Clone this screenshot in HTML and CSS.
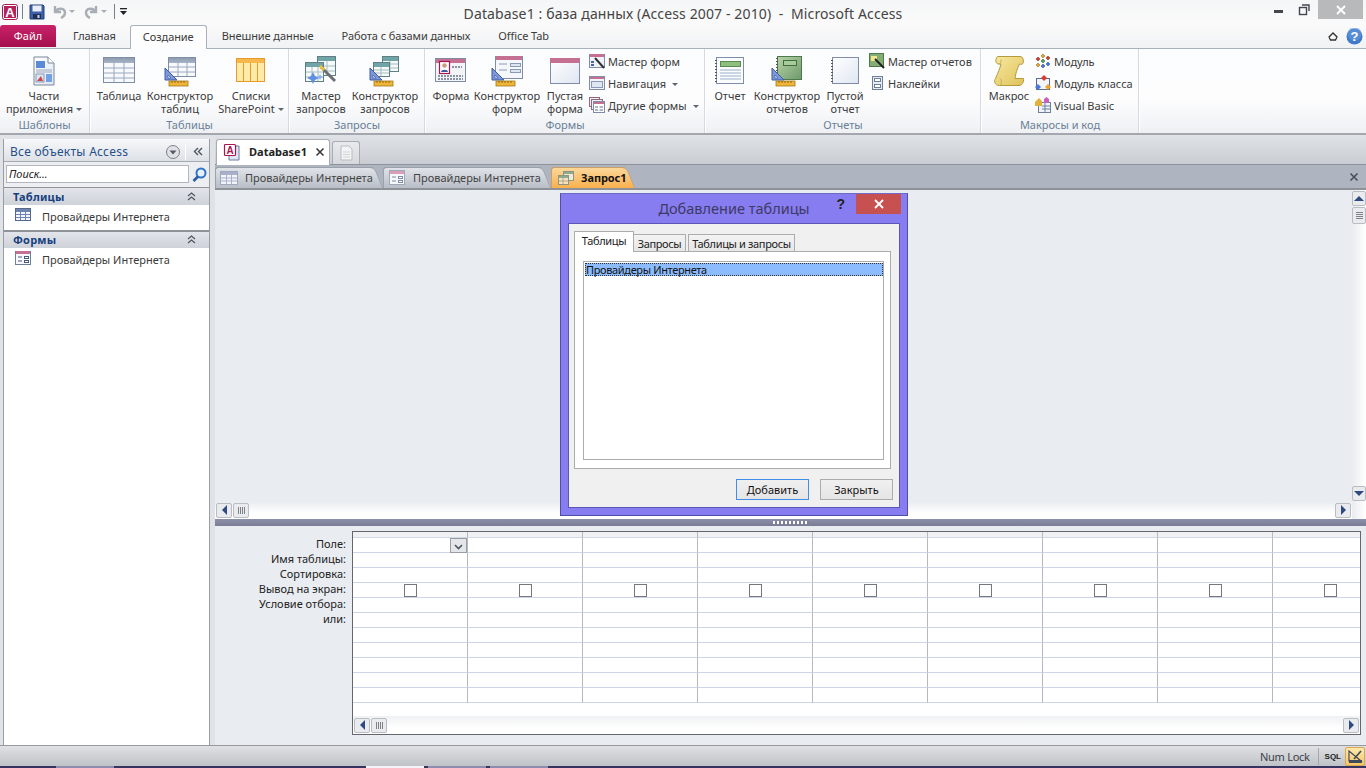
FILE: index.html
```html
<!DOCTYPE html>
<html lang="ru">
<head>
<meta charset="utf-8">
<title>Microsoft Access</title>
<link rel="stylesheet" href="styles.css">
</head>
<body>
<svg class="defs" width="0" height="0">
  <defs>
    <linearGradient id="gHead" x1="0" y1="0" x2="0" y2="1"><stop offset="0" stop-color="#8d9ab0"/><stop offset="1" stop-color="#a9b4c6"/></linearGradient>
    <linearGradient id="gPage" x1="0" y1="0" x2="1" y2="1"><stop offset="0" stop-color="#ffffff"/><stop offset="1" stop-color="#dfe6f2"/></linearGradient>
    <linearGradient id="gScroll" x1="0" y1="0" x2="1" y2="1"><stop offset="0" stop-color="#f6e9a0"/><stop offset="1" stop-color="#e0c25a"/></linearGradient>
    <linearGradient id="gGreen" x1="0" y1="0" x2="1" y2="1"><stop offset="0" stop-color="#b7d3a8"/><stop offset="1" stop-color="#6f9a6a"/></linearGradient>
    <g id="tri">
      <path d="M1 0V12H13Z" fill="#7d97d8" stroke="#3c5ba8"/>
      <path d="M4 7V10H7Z" fill="#fff" stroke="#3c5ba8" stroke-width=".7"/>
      <rect x="5" y="13" width="19" height="5" fill="#eeb53a" stroke="#a37a18" stroke-width=".8"/>
      <path d="M8 13v2M11 13v2M14 13v2M17 13v2M20 13v2" stroke="#7f5b0a" stroke-width=".8"/>
    </g>
  </defs>
</svg>

<header class="titlebar">
  <div class="qat">
    <svg width="16" height="16" viewBox="0 0 16 16"><rect x=".5" y=".5" width="15" height="15" rx="2" fill="#fff" stroke="#a5174f"/><rect x="2" y="2" width="12" height="12" fill="#b4225c"/><text x="8" y="13" class="app-a">A</text></svg>
    <span class="qat-sep"></span>
    <svg width="16" height="16" viewBox="0 0 16 16"><path d="M1 1H14L15 2V15H1Z" fill="#3d5ea8" stroke="#24417f"/><rect x="3.5" y="1.5" width="9" height="6" fill="#e8edf7"/><rect x="4" y="10" width="8" height="5" fill="#1f2f55"/><rect x="8.500" y="11" width="2" height="3" fill="#cbd5e8"/></svg>
    <svg class="qat-undo" width="16" height="16" viewBox="0 0 16 16"><path d="M3 2V8H9M3 8C6 3 13 4 13 9C13 12 11 13 9 14" fill="none" stroke="#a9aeb6" stroke-width="2.400"/></svg>
    <i class="mini-caret mc1"></i>
    <svg class="qat-redo" width="16" height="16" viewBox="0 0 16 16"><path d="M13 2V8H7M13 8C10 3 3 4 3 9C3 12 5 13 7 14" fill="none" stroke="#a9aeb6" stroke-width="2.400"/></svg>
    <i class="mini-caret mc2"></i>
    <span class="qat-sep qat-sep2"></span>
    <svg width="9" height="9" viewBox="0 0 9 9"><rect x="1" y="1" width="7" height="1.300" fill="#222"/><path d="M1 4H8L4.500 8Z" fill="#222"/></svg>
  </div>
  <div class="app-title">Database1 : база данных (Access 2007 - 2010)&nbsp; -&nbsp; Microsoft Access</div>
  <div class="win-controls">
    <svg width="26" height="19" viewBox="0 0 26 19"><rect x="8" y="10" width="9" height="3" fill="#44484e"/></svg>
    <svg width="26" height="19" viewBox="0 0 26 19"><rect x="7.500" y="7.500" width="7" height="7" fill="none" stroke="#44484e" stroke-width="1.400"/><path d="M10 5H17V11" fill="none" stroke="#44484e" stroke-width="1.400"/></svg>
    <span class="win-close"><svg width="12" height="12" viewBox="0 0 12 12"><path d="M2 2L10 10M10 2L2 10" stroke="#fff" stroke-width="2"/></svg></span>
  </div>
</header>

<nav class="tabbar">
  <span class="tab-file">Файл</span>
  <span class="tab t-home">Главная</span>
  <span class="tab tab-active">Создание</span>
  <span class="tab t-ext">Внешние данные</span>
  <span class="tab t-db">Работа с базами данных</span>
  <span class="tab t-office">Office Tab</span>
  <span class="tab-tools">
    <svg width="10" height="9" viewBox="0 0 10 9"><path d="M1 5L5 1L9 5L7.500 8H2.500Z" fill="none" stroke="#333" stroke-width="1.300"/></svg>
    <svg width="17" height="17" viewBox="0 0 17 17"><circle cx="8.500" cy="8.500" r="8" fill="#3f79c9"/><circle cx="8.500" cy="6" r="7" fill="#6d9fe0" opacity=".5"/><text x="8.500" y="13" class="help-q">?</text></svg>
  </span>
</nav>

<section class="ribbon">
  <div class="group g-tpl">
    <div class="group-body">
      <div class="big b-parts">
        <svg width="32" height="32" viewBox="0 0 32 32"><path d="M6 2H20L26 8V30H6Z" fill="url(#gPage)" stroke="#7b8798"/><path d="M20 2V8H26" fill="#fff" stroke="#7b8798"/><rect x="8" y="6" width="9" height="7" fill="#5d8ad6"/><path d="M8 15H24M8 17H24" stroke="#9aa7bb"/><rect x="8" y="19" width="8" height="8" fill="#dce6f4" stroke="#8a9ab5"/><path d="M9 26L13 21L15 26Z" fill="#c44"/><rect x="18" y="19" width="6" height="8" fill="#71a3e4"/></svg>
        <span class="blabel">Части<br>приложения<i class="caret"></i></span>
      </div>
    </div>
    <div class="group-label">Шаблоны</div>
  </div>

  <div class="group g-tbl">
    <div class="group-body">
      <div class="big b-table">
        <svg width="32" height="32" viewBox="0 0 32 32"><rect x=".5" y="2.500" width="31" height="25" fill="#f7f9fd" stroke="#7f8ea6"/><rect x="1" y="3" width="30" height="5" fill="url(#gHead)"/><path d="M1 13H31M1 18H31M1 23H31M11 3V27M21 3V27" stroke="#9aa8bf"/></svg>
        <span class="blabel">Таблица</span>
      </div>
      <div class="big b-ctable">
        <svg width="32" height="32" viewBox="0 0 32 32"><rect x="4.500" y="2.500" width="27" height="19" fill="#f7f9fd" stroke="#7f8ea6"/><rect x="5" y="3" width="26" height="5" fill="url(#gHead)"/><path d="M5 12H31M5 17H31M14 3V21M23 3V21" stroke="#9aa8bf"/><use href="#tri" x="0" y="13"/></svg>
        <span class="blabel">Конструктор<br>таблиц</span>
      </div>
      <div class="big b-list">
        <svg width="32" height="32" viewBox="0 0 32 32"><rect x="1.500" y="3.500" width="28" height="23" fill="#ffeaa8" stroke="#e89a2c"/><rect x="2" y="4" width="27" height="4" fill="#f7b74a"/><path d="M8.500 8V26M15.500 8V26M22.500 8V26" stroke="#e89a2c"/></svg>
        <span class="blabel">Списки<br>SharePoint<i class="caret"></i></span>
      </div>
    </div>
    <div class="group-label">Таблицы</div>
  </div>

  <div class="group g-qry">
    <div class="group-body">
      <div class="big b-wq">
        <svg width="32" height="32" viewBox="0 0 32 32"><rect x="12.500" y="1.500" width="18" height="19" fill="#f5f9f9" stroke="#5f7f84"/><rect x="13" y="2" width="17" height="4" fill="#70a4a6"/><path d="M13 11H30M13 16H30M22 6V20" stroke="#a7bcc0"/><rect x=".5" y="7.500" width="18" height="19" fill="#f5f9f9" stroke="#5f7f84"/><rect x="1" y="8" width="17" height="4" fill="#70a4a6"/><path d="M1 17H18M1 22H18M7 12V26M13 12V26" stroke="#a7bcc0"/><path d="M16 12L30 26" stroke="#6a6f76" stroke-width="3"/><path d="M15 11L19 15" stroke="#eec23e" stroke-width="3"/><path d="M8 17L10 21L14 23L10 25L8 29L6 25L2 23L6 21Z" fill="#5f8fe0"/><path d="M15 19L16 21L18 22L16 23L15 25L14 23L12 22L14 21Z" fill="#86aef0"/></svg>
        <span class="blabel">Мастер<br>запросов</span>
      </div>
      <div class="big b-cq">
        <svg width="32" height="32" viewBox="0 0 32 32"><rect x="13.500" y="1.500" width="16" height="15" fill="#f5f9f9" stroke="#5f7f84"/><rect x="14" y="2" width="15" height="4" fill="#70a4a6"/><path d="M14 9H29M14 13H29M21 6V16" stroke="#a7bcc0"/><rect x="4.500" y="7.500" width="16" height="14" fill="#f5f9f9" stroke="#5f7f84"/><rect x="5" y="8" width="15" height="4" fill="#70a4a6"/><path d="M5 15H20M5 18H20M12 12V21" stroke="#a7bcc0"/><use href="#tri" x="0" y="13"/></svg>
        <span class="blabel">Конструктор<br>запросов</span>
      </div>
    </div>
    <div class="group-label">Запросы</div>
  </div>

  <div class="group g-frm">
    <div class="group-body">
      <div class="big b-f">
        <svg width="32" height="32" viewBox="0 0 32 32"><rect x=".5" y="3.500" width="30" height="23" fill="#f3f4f8" stroke="#7f8ea6"/><rect x="1" y="4" width="29" height="4" fill="#c56f93"/><rect x="4.500" y="6.500" width="10" height="12" fill="#fff" stroke="#a5174f" stroke-width="1.200"/><circle cx="9.500" cy="10.500" r="2.300" fill="#c99c80"/><path d="M6 17C6 14 13 14 13 17Z" fill="#3e5c9a"/><path d="M17 12H27M3 21H28M3 24H28" stroke="#8a93a3" stroke-width="2" stroke-dasharray="2 1"/></svg>
        <span class="blabel">Форма</span>
      </div>
      <div class="big b-cf">
        <svg width="32" height="32" viewBox="0 0 32 32"><rect x="4.500" y="1.500" width="27" height="22" fill="#f6f7fb" stroke="#7f8ea6"/><rect x="5" y="1" width="26" height="4" fill="#c56f93"/><path d="M8 9H16M8 15H16" stroke="#8a9ab5"/><rect x="19.500" y="8.500" width="10" height="3" fill="#dfe6f2" stroke="#8a9ab5"/><rect x="19.500" y="14.500" width="10" height="3" fill="#dfe6f2" stroke="#8a9ab5"/><use href="#tri" x="0" y="13"/></svg>
        <span class="blabel">Конструктор<br>форм</span>
      </div>
      <div class="big b-ef">
        <svg width="32" height="32" viewBox="0 0 32 32"><rect x="1.500" y="3.500" width="29" height="25" fill="url(#gPage)" stroke="#7f8ea6"/><rect x="1" y="3" width="30" height="5" fill="#c56f93"/></svg>
        <span class="blabel">Пустая<br>форма</span>
      </div>
      <div class="small-col c-frm">
        <div class="small"><svg width="16" height="16" viewBox="0 0 16 16"><rect x=".5" y="1.500" width="15" height="13" fill="#eef1f7" stroke="#7f8ea6"/><rect x="1" y="1" width="14" height="3" fill="#c56f93"/><path d="M6 5L15 15" stroke="#333" stroke-width="2"/><path d="M2 9H5M2 12H5" stroke="#4a64a8" stroke-width="2"/></svg><span>Мастер форм</span></div>
        <div class="small"><svg width="16" height="16" viewBox="0 0 16 16"><rect x=".5" y="1.500" width="15" height="13" fill="#f3f4f8" stroke="#7f8ea6"/><rect x="1" y="2" width="14" height="2" fill="#c56f93"/><rect x="2.500" y="6.500" width="11" height="6" fill="#dfe6f2" stroke="#8a9ab5"/></svg><span>Навигация<i class="caret c-gap"></i></span></div>
        <div class="small"><svg width="16" height="16" viewBox="0 0 16 16"><rect x=".5" y=".5" width="10" height="9" fill="#eef1f7" stroke="#8a6a7a"/><rect x="2.500" y="2.500" width="11" height="10" fill="#eef1f7" stroke="#8a6a7a"/><rect x="4.500" y="4.500" width="11" height="11" fill="#fff" stroke="#7f8ea6"/><rect x="5" y="5" width="10" height="2" fill="#c56f93"/><path d="M6 10H9M6 13H9M10.500 10H14M10.500 13H14" stroke="#5f6f88"/></svg><span>Другие формы<i class="caret c-gap"></i></span></div>
      </div>
    </div>
    <div class="group-label">Формы</div>
  </div>

  <div class="group g-rep">
    <div class="group-body">
      <div class="big b-r">
        <svg width="32" height="32" viewBox="0 0 32 32"><rect x="2.500" y="2.500" width="27" height="26" fill="#fbfcfe" stroke="#7f8ea6"/><path d="M2 5V27" stroke="#555" stroke-width="2" stroke-dasharray="1 2"/><rect x="6.500" y="6.500" width="20" height="5" fill="#8fbf7f" stroke="#5c8a50"/><path d="M6 15H27M6 18H27M6 21H27M6 24H27" stroke="#9ab0c8"/></svg>
        <span class="blabel">Отчет</span>
      </div>
      <div class="big b-cr">
        <svg width="32" height="32" viewBox="0 0 32 32"><rect x="6.500" y="1.500" width="24" height="23" fill="url(#gGreen)" stroke="#4d7a4d"/><path d="M6 3V24" stroke="#555" stroke-width="2" stroke-dasharray="1 2"/><rect x="12.500" y="5.500" width="13" height="5" fill="#a8cc98" stroke="#3f6d3f"/><use href="#tri" x="0" y="13"/></svg>
        <span class="blabel">Конструктор<br>отчетов</span>
      </div>
      <div class="big b-er">
        <svg width="32" height="32" viewBox="0 0 32 32"><rect x="3.500" y="2.500" width="26" height="26" fill="url(#gPage)" stroke="#7f8ea6"/><path d="M3 5V27" stroke="#555" stroke-width="2" stroke-dasharray="1 2"/></svg>
        <span class="blabel">Пустой<br>отчет</span>
      </div>
      <div class="small-col c-rep">
        <div class="small"><svg width="16" height="16" viewBox="0 0 16 16"><rect x=".5" y=".5" width="14" height="13" fill="#84ad76" stroke="#4d7a4d"/><rect x="2" y="3" width="6" height="5" fill="#f0e98c"/><path d="M6 6L15 15" stroke="#222" stroke-width="2"/></svg><span>Мастер отчетов</span></div>
        <div class="small"><svg width="16" height="16" viewBox="0 0 16 16"><rect x="3.500" y="1.500" width="10" height="13" fill="#e8edf5" stroke="#6f8096"/><rect x="5.500" y="3.500" width="6" height="3" fill="#fff" stroke="#6f8096"/><rect x="5.500" y="9.500" width="6" height="3" fill="#fff" stroke="#6f8096"/></svg><span>Наклейки</span></div>
      </div>
    </div>
    <div class="group-label">Отчеты</div>
  </div>

  <div class="group g-mac">
    <div class="group-body">
      <div class="big b-m">
        <svg width="32" height="32" viewBox="0 0 32 32"><path d="M5 1.500H27C30 1.500 31 5 30 8.500C29 9.500 27.500 9.500 26.500 9C24 14 22.500 19 22 23.500H30.500C31 27 29 30.500 26 30.500H6C2 30.500 .5 26 2.500 23.500C5 18 7 13 8 9H5.500C3.500 9 2.500 7 3 4.500C3.300 3 4 1.500 5 1.500Z" fill="url(#gScroll)" stroke="#b59a3c"/><path d="M5.500 9C7 9 8.500 7.500 8 4.500M6 30.500C8.500 30.500 9.500 26 7 23.500" fill="none" stroke="#c9ae50"/></svg>
        <span class="blabel">Макрос</span>
      </div>
      <div class="small-col c-mac">
        <div class="small"><svg width="16" height="16" viewBox="0 0 16 16"><path d="M8 1L10 3L8 5L6 3Z" fill="#e6a52e" stroke="#8a5c10" stroke-width=".5"/><path d="M3 4L5 6L3 8L1 6Z" fill="#d83b2a" stroke="#7a1a10" stroke-width=".5"/><path d="M13 3L15 5L13 7L11 5Z" fill="#d83b2a" stroke="#7a1a10" stroke-width=".5"/><path d="M8 6L10 8L8 10L6 8Z" fill="#4da34d" stroke="#2a602a" stroke-width=".5"/><path d="M3 10L5 12L3 14L1 12Z" fill="#e6a52e" stroke="#8a5c10" stroke-width=".5"/><path d="M13 9L15 11L13 13L11 11Z" fill="#4b78d8" stroke="#233f80" stroke-width=".5"/><path d="M8 11L10 13L8 15L6 13Z" fill="#4b78d8" stroke="#233f80" stroke-width=".5"/></svg><span>Модуль</span></div>
        <div class="small"><svg width="16" height="16" viewBox="0 0 16 16"><rect x="1.500" y="3.500" width="13" height="11" fill="#f2f4f9" stroke="#5a6b88"/><path d="M9 0L12 3L9 6L6 3Z" fill="#d83b2a"/><path d="M3 9L6 12L3 15L0 12Z" fill="#4b78d8"/><path d="M13 9L16 12L13 15L10 12Z" fill="#e6a52e"/></svg><span>Модуль класса</span></div>
        <div class="small"><svg width="16" height="16" viewBox="0 0 16 16"><rect x="3.500" y="5.500" width="12" height="10" fill="#eef3fb" stroke="#6f8096"/><path d="M7 9H15M7 12H15M10 6V15" stroke="#6f80a0"/><path d="M0 5L4 1L7 4V9H0Z" fill="#e3b23c"/><path d="M9 2L11.500 0L14 2V6H9Z" fill="#c95fc0"/></svg><span>Visual Basic</span></div>
      </div>
    </div>
    <div class="group-label">Макросы и код</div>
  </div>
  <div class="group-rest"></div>
</section>

<main class="workspace">
  <aside class="navpane">
    <div class="nav-head">
      <span class="nav-title">Все объекты Access</span>
      <svg class="nav-drop" width="16" height="16" viewBox="0 0 16 16"><circle cx="8" cy="8" r="6.500" fill="#dfe2e7" stroke="#7c8087"/><path d="M4.500 6.500H11.500L8 10.500Z" fill="#555a62"/></svg>
      <span class="nav-vsep"></span>
      <svg class="nav-col" width="10" height="9" viewBox="0 0 10 9"><path d="M5 1L1.500 4.500L5 8M9 1L5.500 4.500L9 8" fill="none" stroke="#4d5460" stroke-width="1.400"/></svg>
    </div>
    <div class="nav-search">
      <span class="search-box">Поиск...</span>
      <svg width="17" height="17" viewBox="0 0 17 17"><circle cx="10" cy="7" r="4.500" fill="#e6f0fb" stroke="#2f74c4" stroke-width="2"/><path d="M7 10.500L2.500 15" stroke="#2a5e9e" stroke-width="2.600"/></svg>
    </div>
    <div class="nav-group">
      <span>Таблицы</span>
      <svg width="9" height="9" viewBox="0 0 9 9"><path d="M1 4L4.500 1L8 4M1 8L4.500 5L8 8" fill="none" stroke="#4d5460" stroke-width="1.200"/></svg>
    </div>
    <div class="nav-item">
      <svg width="16" height="14" viewBox="0 0 16 14"><rect x=".5" y=".5" width="15" height="12" fill="#f3f6fc" stroke="#55688a"/><rect x="1" y="1" width="14" height="3" fill="#6e83ad"/><path d="M1 6.500H15M1 9.500H15M5.500 1V12M10.500 1V12" stroke="#6e83ad"/></svg>
      <span>Провайдеры Интернета</span>
    </div>
    <div class="nav-group ng2">
      <span>Формы</span>
      <svg width="9" height="9" viewBox="0 0 9 9"><path d="M1 4L4.500 1L8 4M1 8L4.500 5L8 8" fill="none" stroke="#4d5460" stroke-width="1.200"/></svg>
    </div>
    <div class="nav-item">
      <svg width="16" height="14" viewBox="0 0 16 14"><rect x=".5" y=".5" width="15" height="13" fill="#f7f8fb" stroke="#6e7f9a"/><rect x="1" y="0" width="14" height="3" fill="#c56f93"/><path d="M3 6H7M3 10H7" stroke="#47597a"/><rect x="9.500" y="5.500" width="4" height="2" fill="#fff" stroke="#47597a"/><rect x="9.500" y="9.500" width="4" height="2" fill="#fff" stroke="#47597a"/></svg>
      <span>Провайдеры Интернета</span>
    </div>
  </aside>

  <div class="docarea">
    <div class="officetabs">
      <div class="otab">
        <svg width="18" height="18" viewBox="0 0 18 18"><path d="M6 3H16V17H6Z" fill="#dfe6f2" stroke="#6b7ca0"/><rect x="1.500" y="1.500" width="11" height="11" rx="1" fill="#fff" stroke="#a5174f" stroke-width="1.200"/><text x="7" y="11" class="ot-a">A</text></svg>
        <b>Database1</b>
        <svg class="otab-x" width="10" height="10" viewBox="0 0 10 10"><path d="M1.500 1.500L8.500 8.500M8.500 1.500L1.500 8.500" stroke="#333" stroke-width="1.500"/></svg>
      </div>
      <div class="otab-new"><svg width="13" height="16" viewBox="0 0 13 16"><path d="M1 1H9L12 4V15H1Z" fill="#f4f4f4" stroke="#b8bcc2"/><path d="M3 7H10M3 9.500H10M3 12H10" stroke="#d0d3d8"/></svg></div>
    </div>

    <div class="objtabs">
      <div class="obj">
        <svg width="18" height="14" viewBox="0 0 18 14"><rect x=".5" y=".5" width="17" height="13" fill="#f2f4fa" stroke="#9fa8c0"/><rect x="1" y="1" width="16" height="3" fill="#a7b1cc"/><path d="M1 7H17M1 10H17M6.500 1V13M11.500 1V13" stroke="#a7b1cc"/></svg>
        <span>Провайдеры Интернета</span>
      </div>
      <div class="obj obj2">
        <svg width="16" height="15" viewBox="0 0 16 15"><rect x=".5" y=".5" width="15" height="14" fill="#f6f7fb" stroke="#9fa8b8"/><rect x="1" y="1" width="14" height="3" fill="#d8a0b8"/><path d="M3 7H7M3 11H7" stroke="#7d8aa0"/><rect x="9.500" y="6.500" width="4" height="2" fill="#fff" stroke="#7d8aa0"/><rect x="9.500" y="10.500" width="4" height="2" fill="#fff" stroke="#7d8aa0"/></svg>
        <span>Провайдеры Интернета</span>
      </div>
      <div class="obj obj-on">
        <svg width="16" height="14" viewBox="0 0 16 14"><rect x="5.500" y=".5" width="10" height="9" fill="#f2ead8" stroke="#8e9680"/><rect x="6" y="1" width="9" height="2" fill="#8fa890"/><rect x=".5" y="4.500" width="10" height="9" fill="#f5e2c0" stroke="#8e9680"/><rect x="1" y="5" width="9" height="2" fill="#8fa890"/><path d="M1 10H10M5 7V13" stroke="#b4a888"/></svg>
        <b>Запрос1</b>
      </div>
      <svg class="obj-close" width="10" height="10" viewBox="0 0 10 10"><path d="M1.500 1.500L8.500 8.500M8.500 1.500L1.500 8.500" stroke="#4a4f58" stroke-width="1.600"/></svg>
    </div>

    <div class="qwin">
      <div class="upper">
        <div class="upper-main">
          <div class="upper-canvas"></div>
          <div class="hbar upper-h">
            <span class="sb-btn"><i class="arr-l"></i></span>
            <span class="sb-thumb"><i class="grip-v"></i></span>
            <span class="sb-fill"></span>
            <span class="sb-btn"><i class="arr-r"></i></span>
          </div>
        </div>
        <div class="vbar">
          <span class="vb-btn"><i class="arr-u"></i></span>
          <span class="vb-thumb"><i class="grip-h"></i></span>
          <span class="vb-fill"></span>
          <span class="vb-btn"><i class="arr-d"></i></span>
        </div>
      </div>
      <div class="splitter"><span class="split-grip"></span></div>
      <div class="lower">
        <div class="row-labels">
          <div>Поле:</div>
          <div>Имя таблицы:</div>
          <div>Сортировка:</div>
          <div>Вывод на экран:</div>
          <div>Условие отбора:</div>
          <div>или:</div>
        </div>
        <div class="qbe">
          <div class="qbe-scroll">
            <table class="qbe-table">
              <tr class="hdr"><td></td><td></td><td></td><td></td><td></td><td></td><td></td><td></td><td></td></tr>
              <tr><td class="has-drop"><span class="cell-drop"><svg width="9" height="6" viewBox="0 0 9 6"><path d="M1 1L4.500 4.500L8 1" fill="none" stroke="#4d5460" stroke-width="1.600"/></svg></span></td><td></td><td></td><td></td><td></td><td></td><td></td><td></td><td></td></tr>
              <tr><td></td><td></td><td></td><td></td><td></td><td></td><td></td><td></td><td></td></tr>
              <tr><td></td><td></td><td></td><td></td><td></td><td></td><td></td><td></td><td></td></tr>
              <tr class="chk"><td><i></i></td><td><i></i></td><td><i></i></td><td><i></i></td><td><i></i></td><td><i></i></td><td><i></i></td><td><i></i></td><td><i></i></td></tr>
              <tr><td></td><td></td><td></td><td></td><td></td><td></td><td></td><td></td><td></td></tr>
              <tr><td></td><td></td><td></td><td></td><td></td><td></td><td></td><td></td><td></td></tr>
              <tr><td></td><td></td><td></td><td></td><td></td><td></td><td></td><td></td><td></td></tr>
              <tr><td></td><td></td><td></td><td></td><td></td><td></td><td></td><td></td><td></td></tr>
              <tr><td></td><td></td><td></td><td></td><td></td><td></td><td></td><td></td><td></td></tr>
              <tr><td></td><td></td><td></td><td></td><td></td><td></td><td></td><td></td><td></td></tr>
              <tr><td></td><td></td><td></td><td></td><td></td><td></td><td></td><td></td><td></td></tr>
            </table>
          </div>
          <div class="hbar lower-h">
            <span class="sb-btn"><i class="arr-l"></i></span>
            <span class="sb-thumb"><i class="grip-v"></i></span>
            <span class="sb-fill"></span>
            <span class="sb-btn"><i class="arr-r"></i></span>
          </div>
        </div>
      </div>
    </div>
  </div>
</main>

<footer class="statusbar">
  <span class="num">Num Lock</span>
  <span class="st-sep"></span>
  <span class="sql">SQL</span>
  <span class="design"><svg width="15" height="15" viewBox="0 0 15 15"><path d="M1 2V12H13Z" fill="none" stroke="#3f4a5a" stroke-width="1.200"/><path d="M6 10L13 2" stroke="#3f4a5a" stroke-width="1.600"/><rect x="1" y="11" width="13" height="3" fill="#3f4a5a"/></svg></span>
</footer>
<div class="taskstrip">
  <span class="ts ts-a"></span><span class="ts ts-b"></span><span class="ts ts-c"></span><span class="ts ts-d"></span>
</div>

<div class="dialog">
  <div class="dlg-title">
    <span class="dlg-text">Добавление таблицы</span>
    <span class="dlg-q">?</span>
    <span class="dlg-close"><svg width="10" height="10" viewBox="0 0 10 10"><path d="M1 1L9 9M9 1L1 9" stroke="#fff" stroke-width="1.800"/></svg></span>
  </div>
  <div class="dlg-body">
    <div class="dlg-tabs">
      <span class="dtab dtab-on">Таблицы</span>
      <span class="dtab d2">Запросы</span>
      <span class="dtab d3">Таблицы и запросы</span>
    </div>
    <div class="dlg-panel">
      <div class="dlg-list">
        <div class="dlg-sel">Провайдеры Интернета</div>
      </div>
    </div>
    <div class="dlg-btns">
      <span class="btn btn-def">Добавить</span>
      <span class="btn">Закрыть</span>
    </div>
  </div>
</div>
</body>
</html>
```

FILE: styles.css
```css
* { box-sizing: border-box; }
html, body { margin: 0; padding: 0; }
body {
  width: 1366px; height: 768px; overflow: hidden; position: relative;
  font: 11px/13px "Noto Sans", sans-serif;
  color: #3b3b3b; background: #fff;
  display: flex; flex-direction: column;
}
.defs { position: absolute; }
svg { display: block; flex: none; }
i { font-style: normal; }

/* Title bar */
.titlebar { height: 25px; display: flex; align-items: flex-start; background: linear-gradient(#f5f6f7, #fafafa); position: relative; flex: none; }
.qat { display: flex; align-items: center; height: 23px; padding-left: 2px; width: 400px; position: relative; z-index: 1; }
.qat-sep { width: 1px; height: 15px; background: #7a7f88; margin: 0 6px 0 4px; }
.qat-sep2 { margin: 0 4px 0 7px; }
.app-a { font: bold 13px "Liberation Sans", sans-serif; fill: #fff; text-anchor: middle; }
.qat-undo { margin-left: 7px; }
.qat-redo { margin-left: 8px; }
.mini-caret { width: 0; height: 0; border: 3px solid transparent; border-top: 3px solid #a9aeb6; border-bottom: 0; }
.mc1 { margin-left: 1px; }
.mc2 { margin-left: 2px; }
.app-title { position: absolute; left: 0; right: 0; top: 4px; text-align: center; font: 14px/19px "Noto Sans", sans-serif; letter-spacing: .13px; color: #444; }
.win-controls { margin-left: auto; display: flex; position: relative; }
.win-close { width: 45px; height: 19px; background: #b7b9bb; display: flex; align-items: center; justify-content: center; margin-right: 3px; }

/* Ribbon tabs */
.tabbar { height: 24px; display: flex; align-items: flex-end; position: relative; flex: none; background: linear-gradient(#fafafa, #f1f2f4); border-bottom: 1px solid #a9b1bc; }
.tab-file { width: 56px; height: 22px; margin-bottom: 1px; border-radius: 3px 3px 0 0; background: linear-gradient(#c9226a, #a40f4c); color: #fff; text-align: center; line-height: 21px; }
.tab { height: 23px; line-height: 22px; letter-spacing: -.08px; }
.t-home { margin-left: 17px; }
.tab-active { margin-left: 14px; width: 77px; height: 24px; margin-bottom: -1px; text-align: center; background: #fdfdfd; border: 1px solid #a9b1bc; border-bottom: 0; border-radius: 3px 3px 0 0; }
.t-ext { margin-left: 15px; }
.t-db { margin-left: 28px; }
.t-office { margin-left: 28px; }
.tab-tools { margin-left: auto; display: flex; align-items: center; gap: 8px; padding: 0 3px 3px 0; }
.help-q { font: bold 13px "Liberation Sans", sans-serif; fill: #fff; text-anchor: middle; }

/* Ribbon */
.ribbon { height: 86px; display: flex; flex: none; background: linear-gradient(#fbfcfd, #fdfdfe 60%, #eef0f3); border-bottom: 2px solid #a4a8ae; }
.group { display: flex; flex-direction: column; border-right: 1px solid #d6dae0; box-shadow: 1px 0 0 #fff; margin-right: 1px; flex: none; height: 84px; }
.g-tpl { width: 90px; } .g-tbl { width: 198px; } .g-qry { width: 135px; } .g-frm { width: 279px; } .g-rep { width: 275px; } .g-mac { width: 157px; }
.group-rest { flex: 1; }
.group-body { flex: 1; display: flex; min-height: 0; }
.group-label { height: 18px; line-height: 20px; text-align: center; color: #6a7f98; }
.big { display: flex; flex-direction: column; align-items: center; padding-top: 6px; flex: none; }
.big svg { margin-bottom: 2px; }
.blabel { text-align: center; white-space: nowrap; }
.caret { display: inline-block; width: 0; height: 0; border: 3px solid transparent; border-top: 3px solid #5f6670; border-bottom: 0; margin-left: 3px; vertical-align: 2px; }
.c-gap { margin-left: 6px; }
.b-parts { width: 84px; margin-left: 2px; }
.b-table { width: 44px; margin-left: 6px; }
.b-ctable { width: 68px; margin-left: 5px; }
.b-list { width: 66px; margin-left: 4px; }
.b-wq { width: 50px; margin-left: 6px; }
.b-cq { width: 68px; margin-left: 5px; }
.b-f { width: 36px; margin-left: 7px; }
.b-cf { width: 68px; margin-left: 4px; }
.b-ef { width: 36px; margin-left: 6px; }
.b-r { width: 34px; margin-left: 7px; }
.b-cr { width: 68px; margin-left: 6px; }
.b-er { width: 36px; margin-left: 6px; }
.b-m { width: 42px; margin-left: 6px; }
.small-col { display: flex; flex-direction: column; gap: 6px; padding-top: 4px; flex: none; }
.c-frm { margin-left: 6px; }
.c-rep { margin-left: 6px; }
.c-mac { margin-left: 5px; }
.small { height: 16px; display: flex; align-items: center; gap: 3px; white-space: nowrap; }

/* Workspace */
.workspace { height: 610px; display: flex; flex: none; background: #dfe2e6; }
.navpane { width: 206px; margin-left: 4px; background: #fff; border-right: 1px solid #9a9da2; box-shadow: -1px 0 0 #9a9da2; display: flex; flex-direction: column; margin-top: 4px; }
.nav-head { height: 23px; display: flex; align-items: center; padding: 3px 6px 0 6px; background: linear-gradient(#f7f8fa, #dde1e6); border-bottom: 1px solid #a7abb1; flex: none; }
.nav-title { font-size: 12px; letter-spacing: .28px; color: #264f8a; flex: 1; }
.nav-drop { margin-right: 4px; }
.nav-vsep { width: 1px; height: 16px; background: #fff; margin-right: 7px; }
.nav-search { height: 26px; flex: none; display: flex; align-items: center; gap: 2px; padding: 0 1px 1px 2px; background: #eceef1; border-bottom: 1px solid #8f9399; }
.search-box { width: 185px; height: 18px; line-height: 16px; border: 1px solid #b3b7bd; background: #fff; font-style: italic; color: #222; padding-left: 2px; font-size: 11px; }
.nav-group { height: 17px; flex: none; display: flex; align-items: center; justify-content: space-between; padding: 0 13px 0 9px; background: linear-gradient(#e2e5ea, #ced2d9); color: #17407e; font-weight: bold; font-size: 11px; letter-spacing: .2px; }
.ng2 { height: 18px; border-top: 2px solid #8f9399; padding-bottom: 2px; }
.nav-item { height: 25px; flex: none; display: flex; align-items: flex-start; gap: 11px; padding: 3px 0 0 11px; }
.nav-item span { margin-top: 2px; }

.docarea { width: 1151px; margin-left: 5px; display: flex; flex-direction: column; background: #e9ecf0; border-left: 0; }
.officetabs { height: 30px; flex: none; display: flex; align-items: flex-end; gap: 2px; padding: 4px 0 0 1px; background: linear-gradient(#dfe2e6, #c9ccd2); border-bottom: 1px solid #8f9399; }
.otab { width: 114px; height: 26px; margin-bottom: -1px; display: flex; align-items: center; gap: 8px; padding: 0 0 2px 6px; background: #fff; border: 1px solid #a9adb3; border-bottom: 0; border-radius: 3px 3px 0 0; color: #222; font-size: 11px; }
.otab b { font-weight: bold; }
.otab-new { width: 28px; height: 23px; display: flex; align-items: center; justify-content: center; background: linear-gradient(#e8eaed, #d6d8dd); border: 1px solid #a9adb3; border-bottom: 0; border-radius: 3px 3px 0 0; }
.ot-a { font: bold 10px "Liberation Sans", sans-serif; fill: #a5174f; text-anchor: middle; }

.objtabs { height: 25px; flex: none; display: flex; align-items: flex-end; background: #aeb5c0; border-bottom: 2px solid #8d9198; position: relative; }
.obj { --tab-bg: linear-gradient(#e0e3e8, #b9bec7); --tab-line: #9ba1ab; width: 168px; height: 21px; display: flex; align-items: center; gap: 7px; padding-left: 5px; color: #444; position: relative; z-index: 1; }
.obj::before { content: ""; position: absolute; left: 0; top: 0; bottom: 0; right: 10px; background: var(--tab-bg); border: 1px solid var(--tab-line); border-right: 0; border-bottom: 0; border-radius: 3px 0 0 0; z-index: -1; }
.obj::after { content: ""; position: absolute; top: 0; bottom: 0; right: 4px; width: 14px; background: var(--tab-bg); border: 1px solid var(--tab-line); border-left: 0; border-bottom: 0; border-radius: 0 6px 0 0; transform: skewX(22deg); z-index: -1; }
.obj2 { padding-left: 6px; gap: 8px; }
.obj-on { --tab-bg: linear-gradient(#fcd79a, #f9b04d); --tab-line: #c9a067; width: 84px; color: #111; padding-left: 7px; letter-spacing: -.1px; }
.obj-on b { font-weight: bold; }
.obj-close { position: absolute; right: 7px; top: 7px; }

.qwin { flex: 1; display: flex; flex-direction: column; min-height: 0; }
.upper { height: 329px; flex: none; display: flex; }
.upper-main { flex: 1; display: flex; flex-direction: column; min-width: 0; }
.upper-canvas { flex: 1; background: #e9ecf0; }
.hbar { height: 18px; display: flex; align-items: center; padding: 0 1px; gap: 1px; background: linear-gradient(#f0f1f3, #fff 70%); flex: none; }
.upper-h { background: linear-gradient(#e9ecf0, #fff 70%); }
.sb-btn { width: 16px; height: 15px; display: flex; align-items: center; justify-content: center; background: #e9ebef; border: 1px solid #b9bdc3; border-radius: 2px; flex: none; }
.sb-thumb { width: 16px; height: 15px; display: flex; align-items: center; justify-content: center; background: #e9ebef; border: 1px solid #b9bdc3; border-radius: 2px; flex: none; }
.sb-fill { flex: 1; }
.arr-l { width: 0; height: 0; border: 5px solid transparent; border-right: 5px solid #2f4a7e; border-left: 0; }
.arr-r { width: 0; height: 0; border: 5px solid transparent; border-left: 5px solid #2f4a7e; border-right: 0; }
.arr-u { width: 0; height: 0; border: 5px solid transparent; border-bottom: 5px solid #2f4a7e; border-top: 0; }
.arr-d { width: 0; height: 0; border: 5px solid transparent; border-top: 5px solid #2f4a7e; border-bottom: 0; }
.grip-v { width: 7px; height: 7px; background: repeating-linear-gradient(90deg, #7d8289 0 1px, transparent 1px 2px); }
.grip-h { width: 7px; height: 7px; background: repeating-linear-gradient(180deg, #7d8289 0 1px, transparent 1px 2px); }
.vbar { width: 14px; flex: none; display: flex; flex-direction: column; gap: 1px; padding: 1px 0 18px; background: linear-gradient(90deg, #e9ecf0, #fff); }
.vb-btn { height: 15px; display: flex; align-items: center; justify-content: center; background: #e9ebef; border: 1px solid #b9bdc3; border-radius: 2px; flex: none; }
.vb-thumb { height: 17px; display: flex; align-items: center; justify-content: center; background: #e9ebef; border: 1px solid #b9bdc3; border-radius: 2px; flex: none; }
.vb-fill { flex: 1; }
.splitter { height: 7px; flex: none; background: linear-gradient(#8b8fa7, #7a7d95); display: flex; justify-content: center; align-items: center; }
.split-grip { width: 36px; height: 3px; background: repeating-linear-gradient(90deg, #fff 0 2px, #7a7d95 2px 4px); }
.lower { flex: 1; display: flex; background: #e9ecf0; padding: 5px 5px 10px 0; min-height: 0; }
.row-labels { width: 137px; flex: none; padding-top: 5px; text-align: right; padding-right: 6px; color: #222; }
.row-labels div { height: 15px; line-height: 15px; }
.qbe { flex: 1; display: flex; flex-direction: column; background: #fff; border: 1px solid #63666b; min-width: 0; overflow: hidden; }
.qbe-scroll { flex: 1; overflow: hidden; min-height: 0; }
.qbe-table { border-collapse: separate; border-spacing: 0; table-layout: fixed; width: 1035px; }
.qbe-table td { width: 115px; height: 15px; padding: 0; border-right: 1px solid #b4b9c2; border-bottom: 1px solid #cdd5e4; position: relative; }
.qbe-table .hdr td { height: 6px; background: #f0f1f3; border-bottom: 1px solid #d2d9e6; }
.cell-drop { position: absolute; right: 0; top: 0; width: 17px; height: 15px; background: #e4e6ea; border: 1px solid #9a9da2; display: flex; align-items: center; justify-content: center; padding-top: 3px; }
.chk td i { display: block; width: 13px; height: 13px; margin: 0 auto; background: #fff; border: 1px solid #74787e; }

/* Status bar */
.statusbar { height: 21px; flex: none; display: flex; align-items: center; background: linear-gradient(#dfe1e4, #bfc2c6); border-top: 1px solid #96999e; }
.num { margin-left: auto; font-size: 11px; letter-spacing: -.3px; color: #3d3f4a; }
.st-sep { width: 1px; height: 17px; background: #a4a7ac; margin: 0 6px 0 8px; }
.sql { font: bold 8px "Liberation Sans", sans-serif; color: #222; margin-right: 4px; }
.design { width: 20px; height: 19px; display: flex; align-items: center; justify-content: center; background: linear-gradient(#fde9ae, #f9c666); border: 1px solid #d8a74e; border-radius: 2px; margin-right: 1px; }
.taskstrip { height: 2px; flex: none; background: #35355f; display: flex; }
.ts { width: 58px; background: #8f8dad; }
.ts-a { margin-left: 56px; }
.ts-b { margin-left: 252px; background: #f4f4f8; }
.ts-c { margin-left: 4px; }
.ts-d { margin-left: 4px; }

/* Dialog */
.dialog { position: absolute; left: 560px; top: 193px; width: 348px; height: 323px; background: #877cf0; border: 1px solid #4f4fa8; border-top-color: #6f6ac8; padding: 0 7px 7px; display: flex; flex-direction: column; }
.dlg-title { height: 29px; position: relative; flex: none; text-align: center; }
.dlg-text { font: 14.500px/29px "Noto Sans", sans-serif; color: #3d3a63; }
.dlg-q { position: absolute; right: 55px; top: 0; font: bold 14px/20px "Liberation Sans", sans-serif; color: #222; }
.dlg-close { position: absolute; right: -1px; top: 0; width: 45px; height: 20px; background: #c75050; display: flex; align-items: center; justify-content: center; }
.dlg-body { flex: 1; background: #f0f0f0; border: 1px solid #5b55b8; padding: 7px 8px 0 5px; display: flex; flex-direction: column; color: #222; letter-spacing: -.35px; }
.dlg-tabs { height: 20px; display: flex; align-items: flex-end; flex: none; position: relative; z-index: 1; }
.dtab { height: 17px; line-height: 17px; text-align: center; white-space: nowrap; background: linear-gradient(#f3f3f3, #e6e6e6); border: 1px solid #acacac; border-bottom: 0; }
.dtab-on { height: 21px; width: 60px; margin-bottom: -1px; background: #fff; line-height: 18px; }
.d2 { width: 52px; border-left: 0; }
.d3 { margin-left: 2px; width: 107px; }
.dlg-panel { height: 218px; flex: none; background: #fff; border: 1px solid #acacac; padding: 9px 6px 8px 8px; }
.dlg-list { height: 199px; border: 1px solid #acacac; padding: 1px 0 1px 1px; }
.dlg-sel { height: 13px; line-height: 14px; background: #8cbcfd; outline: 1px dotted #333; outline-offset: -1px; padding-left: 1px; color: #111; }
.dlg-btns { flex: 1; display: flex; justify-content: flex-end; align-items: flex-start; gap: 11px; padding-top: 10px; margin-right: -2px; }
.btn { width: 73px; height: 21px; line-height: 20px; text-align: center; background: linear-gradient(#f0f0f0, #e5e5e5); border: 1px solid #acacac; color: #111; letter-spacing: 0; }
.btn-def { border-color: #3f8fe8; }
```
